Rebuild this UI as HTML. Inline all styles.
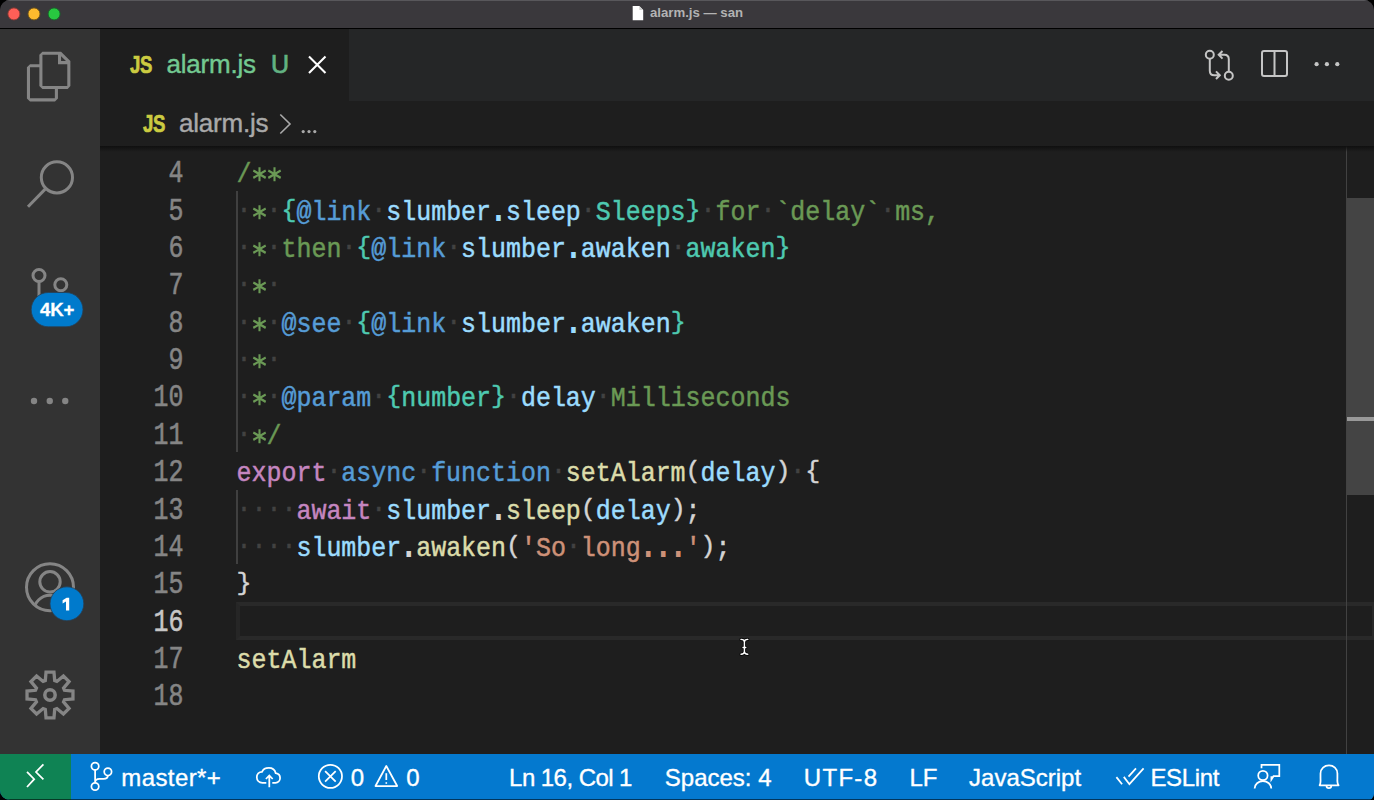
<!DOCTYPE html>
<html><head><meta charset="utf-8">
<style>
*{margin:0;padding:0;box-sizing:border-box}
html,body{width:1374px;height:800px;overflow:hidden;background:#000}
body{position:relative;font-family:"Liberation Sans",sans-serif}
#win{position:absolute;left:0;top:0;width:1374px;height:800px;border-radius:10px 10px 6px 10px;overflow:hidden;background:#1e1e1e}
.abs{position:absolute}
#title{left:0;top:0;width:1374px;height:28px;background:#3a383c;border-top:1px solid #58575b}
#titleline{left:0;top:28px;width:1374px;height:1px;background:#000}
#act{left:0;top:29px;width:100px;height:725px;background:#333333}
#tabs{left:100px;top:29px;width:1274px;height:72px;background:#252627}
#tab{left:100px;top:29px;width:249px;height:72px;background:#1e1e1e}
#crumbs{left:100px;top:101px;width:1274px;height:45px;background:#1e1e1e}
#editor{left:100px;top:146px;width:1274px;height:608px;background:#1e1e1e;overflow:hidden}
#status{left:0;top:754px;width:1374px;height:46px;background:#0479cf}
#remote{left:0;top:754px;width:71px;height:46px;background:#0f8354}
.ui{font-family:"Liberation Sans",sans-serif;white-space:nowrap}
.code{font-family:"Liberation Mono",monospace;font-size:24.95px;white-space:pre;line-height:37.36px;height:37.36px;transform-origin:0 24px;transform:translateY(3.9px) scaleY(1.12);-webkit-text-stroke:0.45px currentColor}
.ln{position:absolute;left:1.5px;width:82px;text-align:right;color:#858585;transform:translateY(3.9px) scaleY(1.28)!important}.act{color:#c6c6c6}
.cl{position:absolute;left:136.6px}
.c{color:#6a9955}.t{color:#4ec9b0}.b{color:#569cd6}.v{color:#9cdcfe}.f{color:#dcdcaa}.k{color:#c586c0}.p{color:#d4d4d4}.s{color:#ce9178}
.w{color:#424242;position:relative;top:-2.3px}
.br{display:inline-block;transform-origin:50% 6.4px;transform:scaleY(0.84)}
.dot{-webkit-text-stroke:1.6px currentColor}
.ast{display:inline-block;width:14.97px;height:0;position:relative}
.ast svg{position:absolute;left:0;top:-14.7px;overflow:visible}
.ast path{stroke:#6a9955;stroke-width:2.1;fill:none}
.guide{position:absolute;left:136px;width:2px;background:#404040}
.st{position:absolute;top:755px;height:46px;line-height:46px;color:#fff;font-size:24px;-webkit-text-stroke:0.35px #fff}
</style></head><body>
<div id="win">
<div id="title" class="abs"></div>
<div id="titleline" class="abs"></div>
<div id="act" class="abs"></div>
<!-- title bar -->
<svg class="abs" style="left:0;top:0" width="1374" height="800" viewBox="0 0 1374 800">
 <circle cx="13.9" cy="13.9" r="6" fill="#fe5f57" stroke="#8e3b36" stroke-width="0.9"/>
 <circle cx="34" cy="13.9" r="6" fill="#febb2e" stroke="#6f5418" stroke-width="0.9"/>
 <circle cx="54.1" cy="13.9" r="6" fill="#28c840" stroke="#17632a" stroke-width="0.9"/>
 <path d="M632.7 6.1h6.6l3.9 3.9v10.2h-10.5z" fill="#ffffff"/>
 <path d="M639.3 6.1v3.9h3.9z" fill="#cfcfcf"/>
</svg>
<div class="abs ui" style="left:650px;top:4px;font-size:13.2px;font-weight:bold;color:#b3b3b3;line-height:18px">alarm.js — san</div>

<div id="tabs" class="abs"></div>
<div id="tab" class="abs"></div>
<div id="crumbs" class="abs"></div>
<div id="editor" class="abs">

<div class="abs" style="left:136px;top:455.7px;width:1138px;height:38.3px;border:4px solid #292929;border-right-width:2px;border-left:4px solid #262626"></div>
<div class="guide" style="top:44.66px;height:261.5px"></div>
<div class="guide" style="top:343.5px;height:74.7px"></div>
<div class="abs" style="left:1246px;top:0;width:1px;height:608px;background:#424242"></div>
<div class="abs" style="left:1247px;top:52px;width:27px;height:297px;background:#444444"></div>
<div class="abs" style="left:1247px;top:271px;width:27px;height:4px;background:#999999"></div>
<div class="abs" style="left:0;top:0;width:1274px;height:6px;background:linear-gradient(#0f0f0f,rgba(30,30,30,0))"></div>
<div class="ln code" style="top:7.30px">4</div>
<div class="cl code" style="top:7.30px"><span class="c">/<span class="ast"><svg width="15" height="16" viewBox="-7.5 -8 15 16"><path d="M0 -6.25V6.25M-6.2 -3.3L6.2 3.3M-6.2 3.3L6.2 -3.3"/></svg></span><span class="ast"><svg width="15" height="16" viewBox="-7.5 -8 15 16"><path d="M0 -6.25V6.25M-6.2 -3.3L6.2 3.3M-6.2 3.3L6.2 -3.3"/></svg></span></span></div>
<div class="ln code" style="top:44.66px">5</div>
<div class="cl code" style="top:44.66px"><span class="w">·</span><span class="c"><span class="ast"><svg width="15" height="16" viewBox="-7.5 -8 15 16"><path d="M0 -6.25V6.25M-6.2 -3.3L6.2 3.3M-6.2 3.3L6.2 -3.3"/></svg></span></span><span class="w">·</span><span class="t"><span class="br">{</span></span><span class="b">@link</span><span class="w">·</span><span class="v">slumber<span class="dot">.</span>sleep</span><span class="w">·</span><span class="t">Sleeps<span class="br">}</span></span><span class="w">·</span><span class="c">for</span><span class="w">·</span><span class="c">`delay`</span><span class="w">·</span><span class="c">ms,</span></div>
<div class="ln code" style="top:82.02px">6</div>
<div class="cl code" style="top:82.02px"><span class="w">·</span><span class="c"><span class="ast"><svg width="15" height="16" viewBox="-7.5 -8 15 16"><path d="M0 -6.25V6.25M-6.2 -3.3L6.2 3.3M-6.2 3.3L6.2 -3.3"/></svg></span></span><span class="w">·</span><span class="c">then</span><span class="w">·</span><span class="t"><span class="br">{</span></span><span class="b">@link</span><span class="w">·</span><span class="v">slumber<span class="dot">.</span>awaken</span><span class="w">·</span><span class="t">awaken<span class="br">}</span></span></div>
<div class="ln code" style="top:119.38px">7</div>
<div class="cl code" style="top:119.38px"><span class="w">·</span><span class="c"><span class="ast"><svg width="15" height="16" viewBox="-7.5 -8 15 16"><path d="M0 -6.25V6.25M-6.2 -3.3L6.2 3.3M-6.2 3.3L6.2 -3.3"/></svg></span></span><span class="w">·</span></div>
<div class="ln code" style="top:156.74px">8</div>
<div class="cl code" style="top:156.74px"><span class="w">·</span><span class="c"><span class="ast"><svg width="15" height="16" viewBox="-7.5 -8 15 16"><path d="M0 -6.25V6.25M-6.2 -3.3L6.2 3.3M-6.2 3.3L6.2 -3.3"/></svg></span></span><span class="w">·</span><span class="b">@see</span><span class="w">·</span><span class="t"><span class="br">{</span></span><span class="b">@link</span><span class="w">·</span><span class="v">slumber<span class="dot">.</span>awaken</span><span class="t"><span class="br">}</span></span></div>
<div class="ln code" style="top:194.10px">9</div>
<div class="cl code" style="top:194.10px"><span class="w">·</span><span class="c"><span class="ast"><svg width="15" height="16" viewBox="-7.5 -8 15 16"><path d="M0 -6.25V6.25M-6.2 -3.3L6.2 3.3M-6.2 3.3L6.2 -3.3"/></svg></span></span><span class="w">·</span></div>
<div class="ln code" style="top:231.46px">10</div>
<div class="cl code" style="top:231.46px"><span class="w">·</span><span class="c"><span class="ast"><svg width="15" height="16" viewBox="-7.5 -8 15 16"><path d="M0 -6.25V6.25M-6.2 -3.3L6.2 3.3M-6.2 3.3L6.2 -3.3"/></svg></span></span><span class="w">·</span><span class="b">@param</span><span class="w">·</span><span class="t"><span class="br">{</span>number<span class="br">}</span></span><span class="w">·</span><span class="v">delay</span><span class="w">·</span><span class="c">Milliseconds</span></div>
<div class="ln code" style="top:268.82px">11</div>
<div class="cl code" style="top:268.82px"><span class="w">·</span><span class="c"><span class="ast"><svg width="15" height="16" viewBox="-7.5 -8 15 16"><path d="M0 -6.25V6.25M-6.2 -3.3L6.2 3.3M-6.2 3.3L6.2 -3.3"/></svg></span>/</span></div>
<div class="ln code" style="top:306.18px">12</div>
<div class="cl code" style="top:306.18px"><span class="k">export</span><span class="w">·</span><span class="b">async</span><span class="w">·</span><span class="b">function</span><span class="w">·</span><span class="f">setAlarm</span><span class="p"><span class="br">(</span></span><span class="v">delay</span><span class="p"><span class="br">)</span></span><span class="w">·</span><span class="p"><span class="br">{</span></span></div>
<div class="ln code" style="top:343.54px">13</div>
<div class="cl code" style="top:343.54px"><span class="w">·</span><span class="w">·</span><span class="w">·</span><span class="w">·</span><span class="k">await</span><span class="w">·</span><span class="v">slumber</span><span class="p"><span class="dot">.</span></span><span class="f">sleep</span><span class="p"><span class="br">(</span></span><span class="v">delay</span><span class="p"><span class="br">)</span>;</span></div>
<div class="ln code" style="top:380.90px">14</div>
<div class="cl code" style="top:380.90px"><span class="w">·</span><span class="w">·</span><span class="w">·</span><span class="w">·</span><span class="v">slumber</span><span class="p"><span class="dot">.</span></span><span class="f">awaken</span><span class="p"><span class="br">(</span></span><span class="s">&#x27;So</span><span class="w">·</span><span class="s">long<span class="dot">.</span><span class="dot">.</span><span class="dot">.</span>&#x27;</span><span class="p"><span class="br">)</span>;</span></div>
<div class="ln code" style="top:418.26px">15</div>
<div class="cl code" style="top:418.26px"><span class="p"><span class="br">}</span></span></div>
<div class="ln code act" style="top:455.62px">16</div>
<div class="ln code" style="top:492.98px">17</div>
<div class="cl code" style="top:492.98px"><span class="f">setAlarm</span></div>
<div class="ln code" style="top:530.34px">18</div>

</div>

<!-- tab -->
<div class="abs ui" style="left:130px;top:50px;font-size:23.5px;font-weight:bold;color:#cbcb41;line-height:30px;transform:scaleX(0.79);transform-origin:0 0;letter-spacing:-0.5px;-webkit-text-stroke:0.7px #cbcb41">JS</div>
<div class="abs ui" id="tabname" style="left:166.5px;top:48px;font-size:26px;color:#73c991;line-height:32px;letter-spacing:-0.2px;-webkit-text-stroke:0.4px #73c991">alarm.js</div>
<div class="abs ui" id="tabu" style="left:271px;top:48px;font-size:25px;color:#62b282;line-height:32px;-webkit-text-stroke:0.7px #62b282">U</div>
<svg class="abs" style="left:0;top:0" width="1374" height="800" viewBox="0 0 1374 800">
 <path d="M309 56.5L325.5 73M325.5 56.5L309 73" stroke="#ffffff" stroke-width="2.1" fill="none"/>
 <!-- breadcrumb chevron -->
 <path d="M280.3 114.5L290 124L280.3 133.5" stroke="#a9a9a9" stroke-width="1.6" fill="none"/>
 <circle cx="303.2" cy="131.6" r="1.6" fill="#a9a9a9"/>
 <circle cx="309" cy="131.6" r="1.6" fill="#a9a9a9"/>
 <circle cx="314.8" cy="131.6" r="1.6" fill="#a9a9a9"/>
</svg>
<!-- breadcrumbs -->
<div class="abs ui" style="left:142.5px;top:109px;font-size:23.5px;font-weight:bold;color:#cbcb41;line-height:30px;transform:scaleX(0.79);transform-origin:0 0;letter-spacing:-0.5px;-webkit-text-stroke:0.7px #cbcb41">JS</div>
<div class="abs ui" id="crumbname" style="left:179px;top:107px;font-size:26px;color:#a9a9a9;line-height:32px;letter-spacing:-0.2px;-webkit-text-stroke:0.4px #a9a9a9">alarm.js</div>
<div id="status" class="abs"></div>
<div id="remote" class="abs"></div>
<div class="abs" style="left:0;top:798.5px;width:1374px;height:1.5px;background:rgba(0,0,0,0.55)"></div>
<svg class="abs" style="left:0;top:0" width="1374" height="800" viewBox="0 0 1374 800">
 <defs><clipPath id="acc"><circle cx="50" cy="587.25" r="23.5"/></clipPath></defs>
 <g fill="none" stroke="#858585" stroke-width="3">
  <circle cx="56.9" cy="177.4" r="15.6"/>
  <path d="M45.9 188.4L28 206.8"/>
  <circle cx="39" cy="275.5" r="6"/>
  <circle cx="60.8" cy="284.8" r="6"/>
  <path d="M39 281.5V300"/>
  <circle cx="50" cy="587.25" r="23.5"/>
  <circle cx="50" cy="581.8" r="10.2"/>
  <circle cx="50" cy="611.5" r="16.2" clip-path="url(#acc)"/>
  <path d="M45.30 680.54 L46.03 672.04 L53.97 672.04 L54.70 680.54 L56.90 681.46 L63.43 675.96 L69.04 681.57 L63.54 688.10 L64.46 690.30 L72.96 691.03 L72.96 698.97 L64.46 699.70 L63.54 701.90 L69.04 708.43 L63.43 714.04 L56.90 708.54 L54.70 709.46 L53.97 717.96 L46.03 717.96 L45.30 709.46 L43.10 708.54 L36.57 714.04 L30.96 708.43 L36.46 701.90 L35.54 699.70 L27.04 698.97 L27.04 691.03 L35.54 690.30 L36.46 688.10 L30.96 681.57 L36.57 675.96 L43.10 681.46Z" stroke-linejoin="miter" stroke-width="3.3"/>
  <circle cx="50" cy="695" r="5.2" stroke-width="3.5"/>
 </g>
 <path transform="translate(24.85 51.75) scale(2.07)" fill="#858585" fill-rule="evenodd" d="M17.5 0h-9L7 1.5V6H2.5L1 7.5v15.07L2.5 24h12.07L16 22.57V18h4.7l1.3-1.43V4.5L17.5 0zm0 2.12l2.38 2.38H17.5V2.12zm-3 20.38h-12v-15H7v9.07L8.5 18h6v4.5zm6-6h-12v-15H16V6h4.5v10.5z"/>
 <g fill="#858585"><circle cx="34" cy="401" r="3.2"/><circle cx="49.75" cy="401" r="3.2"/><circle cx="65.25" cy="401" r="3.2"/></g>
 <rect x="31.2" y="292.5" width="51.8" height="34.3" rx="17.15" fill="#007acc" stroke="#2a3f52" stroke-width="0.8"/>
 <circle cx="66.9" cy="603.75" r="16.9" fill="#007acc" stroke="#2a3f52" stroke-width="0.8"/>
 <!-- editor actions -->
 <g fill="none" stroke="#c5c5c5" stroke-width="2">
  <circle cx="1209.8" cy="54.8" r="4"/>
  <path d="M1209.8 58.8V70.7Q1209.8 75.2 1214.3 75.2H1219.5M1216 71.4L1219.8 75.2L1216 79"/>
  <circle cx="1228.8" cy="75.8" r="4"/>
  <path d="M1228.8 71.8V59.3Q1228.8 54.8 1224.3 54.8H1218.8M1222.5 51L1218.7 54.8L1222.5 58.6"/>
  <rect x="1262" y="51" width="25" height="25" rx="2"/>
  <path d="M1274.5 51V76"/>
 </g>
 <g fill="#c5c5c5"><circle cx="1316.6" cy="64.2" r="2.1"/><circle cx="1326.9" cy="64.2" r="2.1"/><circle cx="1337.3" cy="64.2" r="2.1"/></g>
 <!-- status bar icons -->
 <g fill="none" stroke="#ffffff" stroke-width="1.75">
  <path d="M27 771.8L34.2 779.2L27 787M43.4 764.4L36 772L43.4 779.4"/>
  <circle cx="95.1" cy="766.2" r="3.7"/>
  <circle cx="95.1" cy="786.5" r="3.7"/>
  <circle cx="107.9" cy="771.8" r="3.7"/>
  <path d="M95.1 769.9V782.8M107.9 775.5Q107.9 778.8 103.5 778.8H99.5Q95.1 778.8 95.1 782.5"/>
  <path d="M266.3 782.8H262.5C259 782.8 256.8 780.3 256.8 777.3C256.8 774.3 259 771.8 262 771.8C263 769.5 265.5 767.9 268.8 767.9C272.5 767.9 275 770.3 275.7 773.2C278.2 773.6 280.1 775.6 280.1 778.1C280.1 780.7 278 782.8 275.5 782.8H272.3"/>
  <path d="M269.3 787.2V775.5M265.9 779L269.3 775.5L272.7 779"/>
  <circle cx="330.4" cy="776.35" r="11.6"/>
  <path d="M325.1 771.1L335.7 781.6M335.7 771.1L325.1 781.6"/>
  <path d="M386.3 766L397.2 786H375.5Z" stroke-linejoin="round"/>
  <path d="M386.3 773.2V780"/>
  <path d="M1116.4 777.1L1122.1 784.2M1123.8 776.9L1129.4 784.2L1143.6 768.4M1128.5 776.7L1136 768.4"/>
  <path d="M1261.5 768.2V764.9H1279.3V776.2H1273.5L1271.4 779.5V776.2"/>
  <circle cx="1262.9" cy="775.5" r="4.7"/>
  <path d="M1254.6 788.6A8.3 7.5 0 0 1 1271.3 788.6"/>
  <path d="M1319.6 785.3H1338.6C1337.2 783.5 1337.2 781 1337.4 778V773.5C1337.4 768.5 1333.6 765.3 1329 765.3C1324.4 765.3 1320.5 768.5 1320.5 773.5V778C1320.7 781 1320.7 783.5 1319.6 785.3Z" stroke-linejoin="round"/>
  <path d="M1326.5 785.8A2.4 2.4 0 0 0 1331.3 785.8"/>
 </g>
 <rect x="385.5" y="782.2" width="1.6" height="1.6" fill="#fff"/>
</svg>
<div class="abs ui" style="left:40px;top:296px;font-size:18.6px;font-weight:bold;color:#fff;line-height:28px;letter-spacing:-0.1px;-webkit-text-stroke:0.3px #fff">4K+</div>
<svg class="abs" style="left:0;top:0" width="100" height="800"><path d="M66 610.6V601.6L62.6 603.4V600.3L66.6 597.8H69.2V610.6Z" fill="#fff"/></svg>

<div class="st ui" id="st0" style="left:121.3px;letter-spacing:0.4px">master*+</div>
<div class="st ui" id="st1" style="left:350.8px;letter-spacing:0px">0</div>
<div class="st ui" id="st2" style="left:406.2px;letter-spacing:0px">0</div>
<div class="st ui" id="st3" style="left:509.1px;letter-spacing:-0.55px">Ln 16, Col 1</div>
<div class="st ui" id="st4" style="left:664.8px;letter-spacing:0px">Spaces: 4</div>
<div class="st ui" id="st5" style="left:803.8px;letter-spacing:1.3px">UTF-8</div>
<div class="st ui" id="st6" style="left:909.5px;letter-spacing:0px">LF</div>
<div class="st ui" id="st7" style="left:969.1px;letter-spacing:0px">JavaScript</div>
<div class="st ui" id="st8" style="left:1150.4px;letter-spacing:-0.36px">ESLint</div>
<svg class="abs" style="left:0;top:0" width="1374" height="800"><g fill="none" stroke-linecap="round"><path d="M741 639.4Q744.4 639.4 744.4 642V651.6Q744.4 654.3 741 654.3M747.8 639.4Q744.4 639.4 744.4 642M744.4 651.6Q744.4 654.3 747.8 654.3M743 647.5H745.8" stroke="#000" stroke-width="3.2" opacity="0.8"/><path d="M741 639.4Q744.4 639.4 744.4 642V651.6Q744.4 654.3 741 654.3M747.8 639.4Q744.4 639.4 744.4 642M744.4 651.6Q744.4 654.3 747.8 654.3M743 647.5H745.8" stroke="#fff" stroke-width="1.4"/></g></svg>
</div>
</body></html>
